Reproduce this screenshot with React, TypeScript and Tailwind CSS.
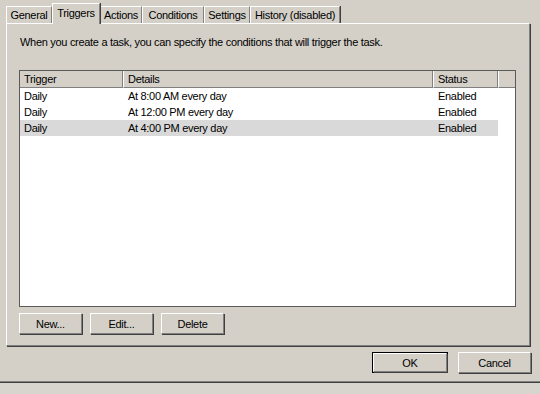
import React from "react";

const font = { fontFamily: '"Liberation Sans", Arial, sans-serif' };

function Tab({ label, selected, w }: { label: string; selected?: boolean; w: string }) {
  if (selected) {
    return (
      <div
        className={`relative z-10 -mb-px flex h-[21px] items-start justify-center border-l border-t border-white bg-[#d4d0c8] pt-[2px] shadow-[1px_0_0_#404040] border-r border-r-[#808080] ${w}`}
      >
        {label}
      </div>
    );
  }
  return (
    <div
      className={`flex h-[17px] items-start justify-center border-l border-t border-white border-r border-r-[#808080] shadow-[1px_0_0_#404040] pt-[1px] ${w}`}
    >
      {label}
    </div>
  );
}

function Btn({ label, w, def }: { label: string; w: string; def?: boolean }) {
  return (
    <div className={`${def ? "border border-black" : ""}`}>
      <div
        className={`flex items-center justify-center border-l border-t border-white border-r border-b border-r-[#808080] border-b-[#808080] shadow-[1px_1px_0_#404040] ${def ? "h-[19px]" : "h-[21px]"} ${w}`}
      >
        {label}
      </div>
    </div>
  );
}

const rows = [
  { t: "Daily", d: "At 8:00 AM every day", s: "Enabled" },
  { t: "Daily", d: "At 12:00 PM every day", s: "Enabled" },
  { t: "Daily", d: "At 4:00 PM every day", s: "Enabled", sel: true },
];

export default function App() {
  return (
    <div
      className="relative h-[394px] w-[540px] overflow-hidden bg-[#d4d0c8] text-[11px] leading-[14px] tracking-[-0.3px] text-black"
      style={font}
    >
      {/* tab strip */}
      <div className="flex h-[23px] items-end pl-[6px]">
        <Tab label="General" w="w-[46px]" />
        <Tab label="Triggers" w="w-[48px]" selected />
        <Tab label="Actions" w="w-[42px]" />
        <Tab label="Conditions" w="w-[62px]" />
        <Tab label="Settings" w="w-[46px]" />
        <Tab label="History (disabled)" w="w-[90px]" />
      </div>

      {/* panel */}
      <div className="ml-[6px] flex h-[323px] w-[524px] flex-col border-l border-t border-white border-r border-b border-r-[#808080] border-b-[#808080] shadow-[1px_1px_0_#404040]">
        <div className="pl-[13px] pt-[11px]">
          When you create a task, you can specify the conditions that will trigger the task.
        </div>

        <div className="ml-[12px] mt-[21px] h-[237px] w-[497px] border border-[#5a5a5a] bg-white">
          {/* header */}
          <div className="flex h-[17px] bg-[#d4d0c8]">
            <div className="flex w-[103px] items-center border-b border-r border-[#808080] pl-[4px]">Trigger</div>
            <div className="flex w-[310px] items-center border-b border-l border-r border-l-white border-[#808080] pl-[4px]">Details</div>
            <div className="flex w-[65px] items-center border-b border-l border-r border-l-white border-[#808080] pl-[4px]">Status</div>
            <div className="flex flex-1 items-center border-b border-l border-l-white border-[#808080]"></div>
          </div>
          {rows.map((r, i) => (
            <div
              key={i}
              className={`flex h-[16px] w-[478px] items-center ${r.sel ? "bg-[#d9d9d9]" : ""}`}
            >
              <div className="w-[103px] pl-[4px]">{r.t}</div>
              <div className="w-[310px] pl-[5px]">{r.d}</div>
              <div className="w-[65px] pl-[5px]">{r.s}</div>
            </div>
          ))}
        </div>

        <div className="ml-[12px] mt-[6px] flex gap-[8px]">
          <Btn label="New..." w="w-[63px]" />
          <Btn label="Edit..." w="w-[63px]" />
          <Btn label="Delete" w="w-[63px]" />
        </div>
      </div>

      {/* footer buttons */}
      <div className="mt-[6px] flex justify-end gap-[10px] pr-[9px]">
        <Btn label="OK" w="w-[74px]" def />
        <Btn label="Cancel" w="w-[73px]" />
      </div>

      {/* separator */}
      <div className="mt-[8px] h-[2px] border-t border-[#808080] border-b border-b-[#404040]"></div>
      <div className="h-full bg-[#d8d5cf]"></div>
    </div>
  );
}
